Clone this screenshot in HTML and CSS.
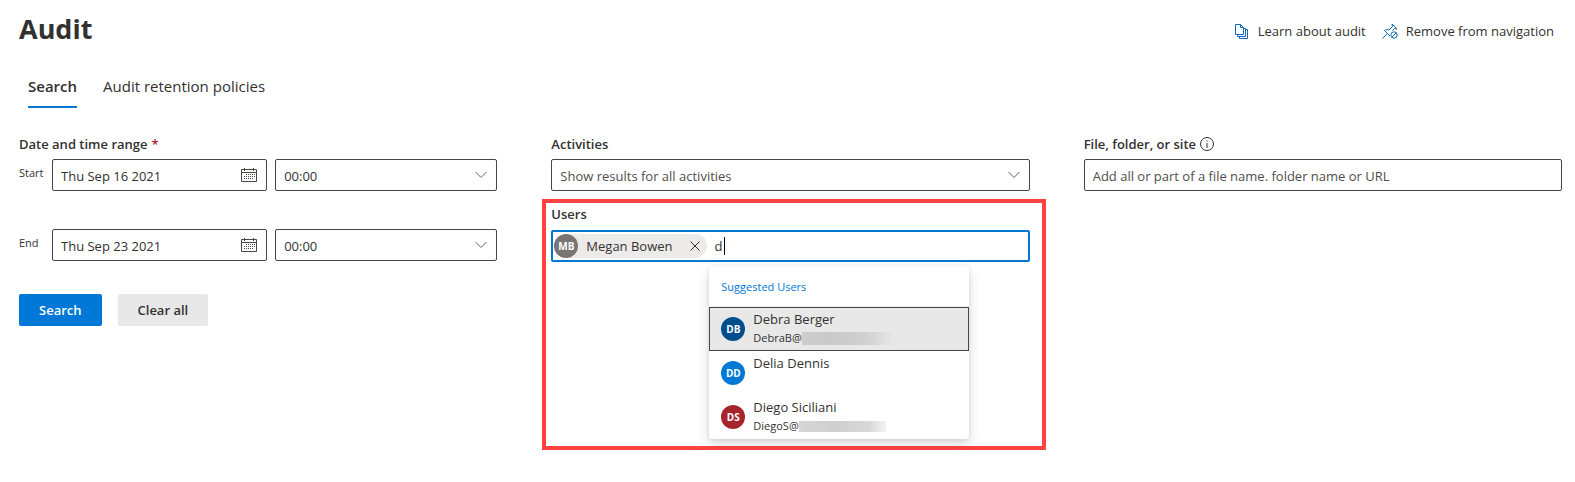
FILE: index.html
```html
<!DOCTYPE html>
<html lang="en">
<head>
<meta charset="utf-8">
<title>Audit</title>
<link rel="stylesheet" href="styles.css">
</head>
<body>
<svg class="defs" aria-hidden="true">
  <symbol id="chevron" viewBox="0 0 12 8"><path d="M.5 1 6 6.500 11.500 1" fill="none" stroke="currentColor"/></symbol>
  <symbol id="calendar" viewBox="0 0 16 16"><path d="M.5 2.500h15v12H.5zM.5 5.500h15M3.500 1v3M12.500 1v3" fill="none" stroke="currentColor"/><path d="M5 7.500h9M3 9.500h11M3 11.500h9" fill="none" stroke="currentColor" stroke-dasharray="1 1"/></symbol>
</svg>
<header class="header">
  <h1 class="title">Audit</h1>
  <nav class="actions">
    <a class="action" href="#"><svg class="icon" viewBox="0 0 16 16"><path d="M1.500 1.500h5l3 3v7h-8zM6.500 1.500v3h3M3.500 11.500v2h8v-8h-2M5.500 13.500v2h8v-9h-2" fill="none" stroke="currentColor"/></svg>Learn about audit</a>
    <a class="action" href="#"><svg class="icon" viewBox="0 0 16 16"><path d="M.5 15.500 5 11M8 13 2.500 7.500C4 6.500 5.500 6.500 7 7l3.500-3.500-.5-2.500 5 5-2.500-.5-2 2" fill="none" stroke="currentColor"/><circle cx="12" cy="12" r="3.200" fill="none" stroke="currentColor"/><path d="m9.800 14.200 4.400-4.400" stroke="currentColor"/></svg>Remove from navigation</a>
  </nav>
</header>
<div class="tabs" role="tablist">
  <button class="tab tab-active" role="tab" aria-selected="true">Search</button>
  <button class="tab" role="tab" aria-selected="false">Audit retention policies</button>
</div>
<form class="filters">
  <fieldset class="column">
    <legend class="label">Date and time range <span class="required">*</span></legend>
    <div class="range">
      <label class="range-label" for="start">Start</label>
      <div class="control"><input class="box" id="start" value="Thu Sep 16 2021"><svg class="calendar"><use href="#calendar"/></svg></div>
      <div class="control"><select class="box" aria-label="Start time"><option>00:00</option></select><svg class="chevron brown"><use href="#chevron"/></svg></div>
    </div>
    <div class="range range-end">
      <label class="range-label" for="end">End</label>
      <div class="control"><input class="box" id="end" value="Thu Sep 23 2021"><svg class="calendar"><use href="#calendar"/></svg></div>
      <div class="control"><select class="box" aria-label="End time"><option>00:00</option></select><svg class="chevron brown"><use href="#chevron"/></svg></div>
    </div>
    <div class="buttons">
      <button class="button primary" type="button">Search</button>
      <button class="button" type="button">Clear all</button>
    </div>
  </fieldset>
  <div class="column">
    <label class="label" for="activities">Activities</label>
    <div class="control"><select class="box muted" id="activities"><option>Show results for all activities</option></select><svg class="chevron"><use href="#chevron"/></svg></div>
    <section class="users">
      <label class="label" for="users">Users</label>
      <div class="picker">
        <span class="chip"><span class="avatar gray">MB</span>Megan Bowen<button class="remove" type="button" aria-label="Remove Megan Bowen"><svg class="cross" viewBox="0 0 10 10"><path d="m.5.5 9 9m0-9-9 9" stroke="currentColor"/></svg></button></span>
        <div class="entry"><input class="query" id="users" value="d"><span class="caret"></span></div>
      </div>
      <div class="menu">
        <div class="menu-title">Suggested Users</div>
        <ul class="people">
          <li><button class="person selected" type="button"><span class="avatar navy">DB</span><span class="details"><span class="name">Debra Berger</span><span class="mail">DebraB@<span class="redacted"></span></span></span></button></li>
          <li><button class="person" type="button"><span class="avatar blue">DD</span><span class="details"><span class="name">Delia Dennis</span></span></button></li>
          <li><button class="person" type="button"><span class="avatar red">DS</span><span class="details"><span class="name">Diego Siciliani</span><span class="mail">DiegoS@<span class="redacted light"></span></span></span></button></li>
        </ul>
      </div>
    </section>
  </div>
  <div class="column">
    <label class="label" for="file">File, folder, or site <svg class="info" viewBox="0 0 14 14"><circle cx="7" cy="7" r="6.500" fill="none" stroke="currentColor"/><path d="M7 6v5M7 3.500v1.200" stroke="currentColor"/></svg></label>
    <input class="box" id="file" placeholder="Add all or part of a file name. folder name or URL">
  </div>
</form>
</body>
</html>
```

FILE: styles.css
```css
* { box-sizing: border-box; }
body { margin: 0; background: #fff; color: #323130; font: 13px/20px "Open Sans", "Noto Sans", sans-serif; }
button, input, select { font: inherit; color: inherit; }
.defs { display: none; }

.header { display: flex; justify-content: space-between; align-items: center; padding: 11px 21px 0 19px; }
.title { margin: 0; font-size: 27px; line-height: 36px; font-weight: 700; }
.actions { display: flex; gap: 16px; padding-top: 4px; }
.action { display: flex; align-items: center; gap: 8px; color: inherit; text-decoration: none; }
.icon { width: 16px; height: 16px; color: #1267b8; }

.tabs { display: flex; gap: 26px; padding: 27px 28px 0; }
.tab { border: 0; border-bottom: 2px solid transparent; background: none; padding: 0 0 8px; font-size: 15px; line-height: 24px; }
.tab-active { border-color: #0078d4; font-weight: 600; }

.filters { display: grid; grid-template-columns: repeat(3, minmax(0, 1fr)); gap: 54px; padding: 26px 13px 0 19px; }
.column { min-width: 0; margin: 0; border: 0; padding: 0; }
.label { display: flex; align-items: center; gap: 4px; padding: 0 0 5px; font-weight: 600; }
.required { color: #a4262c; }
.info { width: 14px; height: 14px; }

.box { display: block; width: 100%; height: 32px; margin: 0; border: 1px solid #484644; border-radius: 2px; padding: 1px 8px 0; background: #fff; appearance: none; }
.box::placeholder { color: #504e4c; opacity: 1; }
.muted { color: #504e4c; }
.control { display: grid; align-items: center; }
.control > * { grid-area: 1 / 1; }
.calendar, .chevron { justify-self: end; pointer-events: none; }
.calendar { width: 16px; height: 16px; margin-right: 10px; color: #484644; }
.chevron { width: 12px; height: 8px; margin-right: 10px; color: #605e5c; }
.brown { color: #8a5a4e; }

.range { display: grid; grid-template-columns: 25px 215fr 222fr; gap: 8px; }
.range-label { padding-top: 4px; font-size: 11px; }
.range-end { margin-top: 38px; }
.buttons { display: flex; gap: 16px; margin-top: 33px; }
.button { height: 32px; border: 0; border-radius: 2px; padding: 0 20px; background: #e8e8e8; font-weight: 600; }
.primary { background: #0078d7; color: #fff; }

.users { margin: 8px -16px 0 -9px; border: 4px solid #ff4343; padding: 1px 12px 7px 5px; }
.users .label { padding-bottom: 6px; }
.picker { display: flex; align-items: center; gap: 8px; height: 32px; border: 2px solid #0078d4; border-radius: 2px; padding: 0 1px; }
.chip { display: flex; align-items: center; border-radius: 12px; background: #edebe9; white-space: nowrap; }
.avatar { display: flex; flex: none; align-items: center; justify-content: center; width: 24px; height: 24px; border-radius: 50%; color: #fff; font-size: 10px; font-weight: 700; }
.chip .avatar { margin-right: 8px; }
.remove { display: flex; margin-left: 10px; border: 0; padding: 7px; background: none; }
.cross { width: 10px; height: 10px; }
.entry { position: relative; flex: 1; min-width: 0; }
.query { display: block; width: 100%; border: 0; padding: 0; background: none; outline: 0; }
.caret { position: absolute; top: 1px; left: 9px; width: 1px; height: 18px; background: #000; }
.gray { background: #7a7574; }
.navy { background: #004e8c; }
.blue { background: #0078d4; }
.red { background: #a4262c; }

.menu { width: 260px; margin: 4px 0 0 158px; border-radius: 2px; background: #fff; box-shadow: 0 6px 14px rgba(0, 0, 0, .13), 0 1px 4px rgba(0, 0, 0, .11); }
.menu-title { height: 41px; border-bottom: 1px solid #eaeaea; padding: 0 12px; color: #0078d4; font-size: 11px; line-height: 41px; }
.people { margin: 0; padding: 0; list-style: none; }
.person { display: flex; align-items: center; gap: 8px; width: 100%; height: 44px; border: 1px solid transparent; padding: 0 11px; background: none; text-align: left; }
.selected { border-color: #484644; background: #e8e8e8; }
.details { display: flex; flex-direction: column; align-self: stretch; padding-top: 1px; }
.name { line-height: 21px; }
.mail { display: flex; align-items: center; font-size: 11px; line-height: 16px; }
.redacted { width: 92px; height: 13px; background: linear-gradient(90deg, #cdcdcd, #c9c9c9 30%, #d0d0d0 70%, #e8e8e8); }
.light { width: 87px; height: 11px; background: linear-gradient(90deg, #d6d6d6, #cfcfcf 40%, #d8d8d8 80%, #f4f4f4); }
```
